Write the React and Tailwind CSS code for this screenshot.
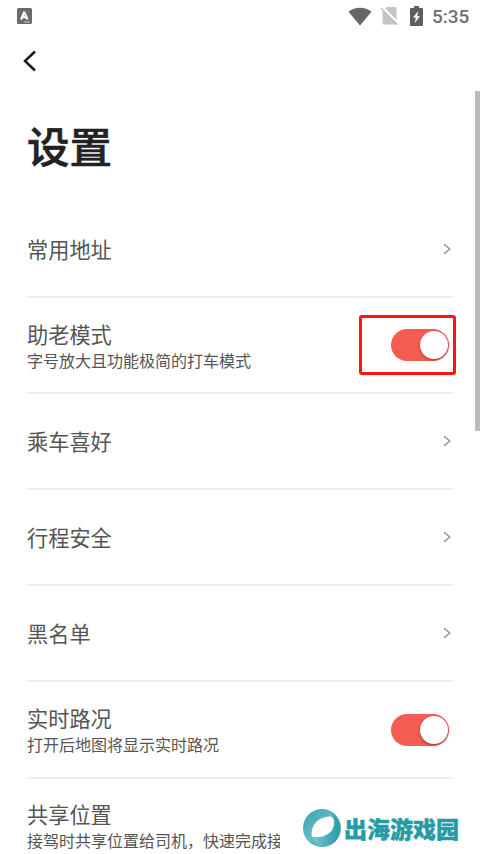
import React, { useState } from 'react';

const rows = [
  { title: '常用地址', type: 'link' },
  { title: '助老模式', desc: '字号放大且功能极简的打车模式', type: 'switch', marked: true },
  { title: '乘车喜好', type: 'link' },
  { title: '行程安全', type: 'link' },
  { title: '黑名单', type: 'link' },
  { title: '实时路况', desc: '打开后地图将显示实时路况', type: 'switch' },
  { title: '共享位置', desc: '接驾时共享位置给司机，快速完成接驾', type: 'none' },
];

function StatusBar() {
  return (
    <div className="flex h-8 items-center justify-between pl-[17px] pr-[10px]">
      <svg width="15" height="16" viewBox="0 0 15 16">
        <rect width="15" height="16" rx="1.5" fill="#6b6b6b" />
        <path d="M4 11.5 7 4.5h.5l3 7M5.2 9.3h4.2" fill="none" stroke="#fff" strokeWidth="2" />
        <path d="M7.5 14h5.5" stroke="#c4c4c4" strokeWidth="1.4" strokeDasharray="1.4 .5" />
      </svg>
      <div className="flex items-center">
        <svg width="24" height="19" viewBox="0 0 24 19">
          <path d="M.5 4.7C7-.5 17-.5 23.5 4.7L12 18.5Z" fill="#666" />
        </svg>
        <svg className="ml-[8px]" width="19" height="20" viewBox="0 0 19 20">
          <path d="M6.5 1H15q1.500 0 1.500 1.500v14.500q0 1.500-1.500 1.500H4q-1.500 0-1.500-1.500V6Z" fill="#c4c4c4" />
          <path d="M2.500 1.500 19 18" stroke="#fff" strokeWidth="2.500" />
          <path d="M1 2.200 17.300 18.700" stroke="#bdbdbd" strokeWidth="1.500" />
        </svg>
        <svg className="ml-[11px]" width="13" height="20" viewBox="0 0 13 20">
          <path d="M4 0h5v2h3q1 0 1 1v16q0 1-1 1H1q-1 0-1-1V3q0-1 1-1h3Z" fill="#5e5e5e" />
          <path d="M8.300 5 3 11.500h2.800L4.800 17 10 10.200H7.200Z" fill="#fff" />
        </svg>
        <span className="ml-[9px] w-[38px] pt-px font-['Roboto',sans-serif] text-[19px] font-medium leading-8 text-[#6e6e6e]">5:35</span>
      </div>
    </div>
  );
}

function Switch({ marked }) {
  const [on, setOn] = useState(true);
  return (
    <div
      className={`flex items-center justify-end ${
        marked ? '-mr-[3px] h-[60px] w-[97px] rounded-[3px] border-[3px] border-[#fd1512] pr-1' : 'mr-1'
      }`}
    >
      <button
        type="button"
        role="switch"
        aria-checked={on}
        onClick={() => setOn(!on)}
        className={`flex h-8 w-[58px] items-center rounded-full px-[1.5px] ${
          on ? 'justify-end bg-[#f65d52]' : 'justify-start bg-gray-300'
        }`}
      >
        <span className="size-[28px] rounded-full bg-white shadow-[0_1px_3px_rgba(90,0,0,0.5)]" />
      </button>
    </div>
  );
}

function Row({ title, desc, type, marked }) {
  return (
    <li className="flex h-[96.1px] items-center justify-between border-b-2 border-[#eee]">
      <div className="whitespace-nowrap">
        <p className={`text-[21.2px] leading-7 text-[#555] ${desc ? 'pt-px' : ''}`}>{title}</p>
        {desc && <p className="text-[16px] leading-6 text-[#555]">{desc}</p>}
      </div>
      {type === 'link' && (
        <svg className="mr-[2px]" width="8" height="12" viewBox="0 0 8 12">
          <path d="m1 1.200 5.800 4.800L1 10.800" fill="none" stroke="#999" strokeWidth="1.500" />
        </svg>
      )}
      {type === 'switch' && <Switch marked={marked} />}
    </li>
  );
}

function Watermark() {
  return (
    <div className="absolute bottom-0 left-[280px] flex h-[52px] w-[200px] items-center bg-white pl-[22px]">
      <svg width="40" height="40" viewBox="0 0 40 40">
        <defs>
          <linearGradient id="ring" x1="0" y1="0" x2="1" y2="1">
            <stop offset="0" stopColor="#399fae" />
            <stop offset=".5" stopColor="#62bdc5" />
            <stop offset="1" stopColor="#2395a1" />
          </linearGradient>
          <linearGradient id="ringShade" x1="0" y1="0" x2="1" y2="0">
            <stop offset="0" stopColor="#78c9cf" />
            <stop offset="1" stopColor="#2b9ba8" />
          </linearGradient>
        </defs>
        <circle cx="20" cy="20" r="19" fill="url(#ring)" />
        <path d="M9 28Q24 30 32 19Q34 11 29 4A19 19 0 0 1 20 39Q13 38 9 28Z" fill="url(#ringShade)" />
        <path d="M10 28.500C8 19 15 8.500 29 8.500C33 11 32.800 18 30 22C26 28 17 30.500 10 28.500Z" fill="#fff" />
      </svg>
      <span className="ml-[2px] whitespace-nowrap text-[23px] font-black leading-8 text-[#259ba5] [-webkit-text-stroke:0.4px_#259ba5]">
        出海游戏园
      </span>
    </div>
  );
}

export default function App() {
  return (
    <div className="relative h-[854px] w-[480px] overflow-hidden bg-white font-['Noto_Sans_CJK_SC',sans-serif]">
      <StatusBar />
      <nav className="flex h-[58px] items-center pl-[23px]">
        <svg width="14" height="22" viewBox="0 0 14 22">
          <path d="M12 1.500 2 11l10 9.500" fill="none" stroke="#1c1c1c" strokeWidth="2.500" />
        </svg>
      </nav>
      <h1 className="flex h-[112px] items-center pb-0.5 pl-[27px] text-[42.5px] font-medium leading-none text-[#222] [-webkit-text-stroke:0.6px_#222]">
        设置
      </h1>
      <ul className="px-[27px]">
        {rows.map((row) => (
          <Row key={row.title} {...row} />
        ))}
      </ul>
      <div className="absolute right-0 top-[91px] h-[340px] w-[5px] bg-[#bbb]" />
      <Watermark />
    </div>
  );
}
